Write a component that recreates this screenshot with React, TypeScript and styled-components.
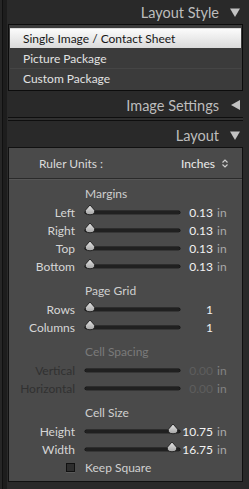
import styled, { createGlobalStyle } from 'styled-components';

const GlobalStyle = createGlobalStyle`
  html, body {
    margin: 0;
    padding: 0;
    background: #282828;
  }
  body {
    font-family: Lato, "Open Sans", sans-serif;
    -webkit-font-smoothing: antialiased;
  }
`;

const Screen = styled.div`
  display: flex;
  width: 249px;
  height: 489px;
  background: #292929;
  overflow: hidden;
`;

const Rail = styled.div`
  width: 7px;
  flex: none;
  background: linear-gradient(
    to right,
    #262626 0,
    #262626 2px,
    #101010 2px,
    #101010 3px,
    #1d1d1d 3px,
    #1d1d1d 7px
  );
`;

const Panel = styled.div`
  flex: 1;
  display: flex;
  flex-direction: column;
  padding: 0 6px 0 1px;
`;

const Header = styled.div<{ $gap?: number }>`
  height: 24px;
  margin-top: ${({ $gap }) => $gap ?? 0}px;
  display: flex;
  align-items: center;
  justify-content: flex-end;
  padding-right: 3px;
  color: #bdbdbd;
  font-size: 14.5px;
`;

const HeaderIcon = styled.svg`
  margin-left: 11px;
  flex: none;
`;

const StyleList = styled.div`
  border: 1px solid #0c0c0c;
  background: #3b3b3b;
  padding: 3px 1px 2px;
`;

const StyleItem = styled.div<{ $selected?: boolean; $divided?: boolean }>`
  height: 20px;
  line-height: 20px;
  padding-left: 13px;
  font-size: 12px;
  color: ${({ $selected }) => ($selected ? '#161616' : '#e2e2e2')};
  background: ${({ $selected }) =>
    $selected ? 'linear-gradient(to bottom, #fbfbfb, #dadada)' : 'transparent'};
  border-top: 1px solid
    ${({ $divided }) => ($divided ? 'rgba(255,255,255,0.05)' : 'transparent')};
  box-sizing: border-box;
`;

const Separator = styled.div`
  height: 2px;
  border-top: 1px solid #0e0e0e;
  border-bottom: 1px solid #0e0e0e;
  background: #303030;
`;

const LayoutBox = styled.div`
  border: 1px solid #101010;
  background: #4a4a4a;
  display: flex;
  flex-direction: column;
`;

const RulerRow = styled.div`
  height: 30px;
  display: flex;
  align-items: center;
  justify-content: space-between;
  padding: 0 14px 0 30px;
  font-size: 12px;
  color: #dadada;
  border-bottom: 1px solid #2a2a2a;
  box-shadow: 0 1px 0 #565656;
`;

const RulerValue = styled.div`
  display: flex;
  align-items: center;
  gap: 7px;
  color: #ececec;
`;

const Sections = styled.div`
  display: flex;
  flex-direction: column;
  gap: 7px;
  padding: 6px 0 5px;
`;

const Section = styled.div`
  display: flex;
  flex-direction: column;
`;

const SectionTitle = styled.div<{ $disabled?: boolean }>`
  height: 18px;
  line-height: 18px;
  padding-left: 76px;
  font-size: 12px;
  color: ${({ $disabled }) => ($disabled ? '#7a7a7a' : '#cfcfcf')};
`;

const Row = styled.div`
  height: 18px;
  display: flex;
  align-items: center;
  font-size: 12px;
`;

const Label = styled.div<{ $disabled?: boolean }>`
  width: 66px;
  text-align: right;
  color: ${({ $disabled }) => ($disabled ? '#313131' : '#d6d6d6')};
`;

const Track = styled.div`
  position: relative;
  width: 95px;
  height: 3px;
  margin-left: 10px;
  border-radius: 2px;
  background: #202020;
  box-shadow: 0 0 0 0.5px #111, 0 1px 0 #5c5c5c;
`;

const Thumb = styled.svg`
  position: absolute;
  top: -7px;
  margin-left: -6px;
`;

const Value = styled.div<{ $disabled?: boolean }>`
  width: 33px;
  text-align: right;
  color: ${({ $disabled }) => ($disabled ? '#5e5e5e' : '#f2f2f2')};
`;

const Unit = styled.span<{ $disabled?: boolean }>`
  margin-left: 4px;
  color: ${({ $disabled }) => ($disabled ? '#828282' : '#a9a9a9')};
`;

const CheckRow = styled(Row)`
  color: #d0d0d0;
`;

const CheckCell = styled.div`
  width: 66px;
  display: flex;
  justify-content: flex-end;
`;

const CheckBox = styled.div`
  width: 7px;
  height: 7px;
  border: 1px solid #111;
  background: #2e2e2e;
  box-shadow: 0 1px 0 #5a5a5a;
`;

const CheckText = styled.div`
  margin-left: 10px;
`;

function DownTriangle() {
  return (
    <HeaderIcon width="10" height="9" viewBox="0 0 10 9">
      <path d="M0 0.5 L10 0.5 L5 9 Z" fill="#c2c2c2" />
    </HeaderIcon>
  );
}

function LeftTriangle() {
  return (
    <HeaderIcon width="10" height="10" viewBox="0 0 10 10">
      <path d="M10 0 L10 10 L1 5 Z" fill="#c2c2c2" />
    </HeaderIcon>
  );
}

function Stepper() {
  return (
    <svg width="6" height="9" viewBox="0 0 6 9">
      <path d="M0.5 3.5 L3 1 L5.5 3.5" fill="none" stroke="#cfcfcf" strokeWidth="1.2" />
      <path d="M0.5 5.5 L3 8 L5.5 5.5" fill="none" stroke="#cfcfcf" strokeWidth="1.2" />
    </svg>
  );
}

type SliderProps = {
  label: string;
  value: string;
  unit?: string;
  ratio?: number;
  disabled?: boolean;
};

function Slider({ label, value, unit, ratio, disabled }: SliderProps) {
  return (
    <Row>
      <Label $disabled={disabled}>{label}</Label>
      <Track>
        {!disabled && ratio !== undefined && (
          <Thumb
            width="12"
            height="12"
            viewBox="0 0 12 12"
            style={{ left: `${5 + ratio * 85}px` }}
          >
            <defs>
              <linearGradient id="thumb" x1="0" y1="0" x2="0" y2="1">
                <stop offset="0" stopColor="#e6e6e6" />
                <stop offset="1" stopColor="#a4a4a4" />
              </linearGradient>
            </defs>
            <path
              d="M6 1 L10.6 6.2 Q11.4 10.6 6 10.8 Q0.6 10.6 1.4 6.2 Z"
              fill="url(#thumb)"
              stroke="#1c1c1c"
              strokeWidth="0.9"
            />
          </Thumb>
        )}
      </Track>
      <Value $disabled={disabled}>{value}</Value>
      {unit && <Unit $disabled={disabled}>{unit}</Unit>}
    </Row>
  );
}

export default function App() {
  return (
    <Screen>
      <GlobalStyle />
      <Rail />
      <Panel>
        <Header>
          Layout Style
          <DownTriangle />
        </Header>
        <StyleList>
          <StyleItem $selected>Single Image / Contact Sheet</StyleItem>
          <StyleItem>Picture Package</StyleItem>
          <StyleItem $divided>Custom Package</StyleItem>
        </StyleList>
        <Header $gap={2}>
          Image Settings
          <LeftTriangle />
        </Header>
        <Separator />
        <Header $gap={2}>
          Layout
          <DownTriangle />
        </Header>
        <LayoutBox>
          <RulerRow>
            <span>Ruler Units :</span>
            <RulerValue>
              Inches
              <Stepper />
            </RulerValue>
          </RulerRow>
          <Sections>
            <Section>
              <SectionTitle>Margins</SectionTitle>
              <Slider label="Left" value="0.13" unit="in" ratio={0} />
              <Slider label="Right" value="0.13" unit="in" ratio={0} />
              <Slider label="Top" value="0.13" unit="in" ratio={0} />
              <Slider label="Bottom" value="0.13" unit="in" ratio={0} />
            </Section>
            <Section>
              <SectionTitle>Page Grid</SectionTitle>
              <Slider label="Rows" value="1" ratio={0} />
              <Slider label="Columns" value="1" ratio={0} />
            </Section>
            <Section>
              <SectionTitle $disabled>Cell Spacing</SectionTitle>
              <Slider label="Vertical" value="0.00" unit="in" disabled />
              <Slider label="Horizontal" value="0.00" unit="in" disabled />
            </Section>
            <Section>
              <SectionTitle>Cell Size</SectionTitle>
              <Slider label="Height" value="10.75" unit="in" ratio={0.98} />
              <Slider label="Width" value="16.75" unit="in" ratio={0.97} />
              <CheckRow>
                <CheckCell>
                  <CheckBox />
                </CheckCell>
                <CheckText>Keep Square</CheckText>
              </CheckRow>
            </Section>
          </Sections>
        </LayoutBox>
      </Panel>
    </Screen>
  );
}
